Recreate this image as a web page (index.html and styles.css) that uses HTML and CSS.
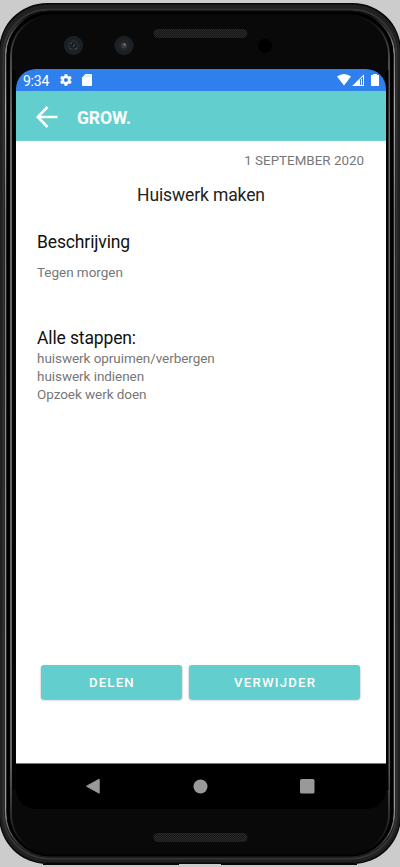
FILE: index.html
```html
<!DOCTYPE html>
<html lang="nl">
<head>
<meta charset="utf-8">
<title>GROW.</title>
<link rel="stylesheet" href="styles.css">
</head>
<body>
<div class="phone">
  <svg class="bezel" width="400" height="867" viewBox="0 0 400 867" fill="none" aria-hidden="true">
    <defs>
      <linearGradient id="silver" x1="0" y1="0" x2="0" y2="867" gradientUnits="userSpaceOnUse">
        <stop offset=".015" stop-color="#111"/><stop offset=".05" stop-color="#777"/><stop offset=".12" stop-color="#aaa"/><stop offset=".25" stop-color="#777"/><stop offset=".75" stop-color="#999"/><stop offset=".93" stop-color="#999"/><stop offset=".985" stop-color="#222"/>
      </linearGradient>
      <linearGradient id="inner" x1="0" y1="0" x2="0" y2="867" gradientUnits="userSpaceOnUse">
        <stop offset=".018" stop-color="#08080a"/><stop offset=".07" stop-color="#55555c"/><stop offset=".15" stop-color="#77777e"/><stop offset=".88" stop-color="#707078"/><stop offset=".98" stop-color="#08080a"/>
      </linearGradient>
      <pattern id="mesh" width="2" height="2" patternUnits="userSpaceOnUse"><path d="M0 0h2v2H0z" fill="#151515"/><path d="M0 0h1v1H0zM1 1h1v1H1z" fill="#2b2b2b"/></pattern>
    </defs>
    <rect x="-1" y="3" width="402" height="861" rx="48" fill="#090909"/>
    <path d="M43 863.500h136v1.500H43zM221 863.500h136v1.500H221z" fill="#050505"/>
    <rect x="2" y="6.500" width="396" height="854" rx="46" stroke="#202020" stroke-width="4"/>
    <rect x="3.500" y="9.500" width="393" height="849" rx="45" stroke="#333" stroke-width="2"/>
    <rect x="5.700" y="11.500" width="388.600" height="845" rx="44" stroke="url(#silver)" stroke-width="1.600"/>
    <rect x="8" y="13" width="384" height="842" rx="42" stroke="#000" stroke-width="3"/>
    <rect x="11" y="15.500" width="378" height="838.500" rx="40" stroke="url(#inner)" stroke-width="1.700"/>
    <path d="M14 70v720M387 70v720" stroke="#020203" stroke-width="3"/>
    <rect x="153.500" y="29" width="94" height="9" rx="4.500" fill="url(#mesh)"/>
    <rect x="153.500" y="833" width="94" height="9" rx="4.500" fill="url(#mesh)"/>
    <circle cx="73.500" cy="45.500" r="9.700" fill="#192026"/><circle cx="73.500" cy="45.500" r="6" fill="#262729"/><circle cx="73.500" cy="45.500" r="3" fill="#161c26"/><path d="M71 43l1 1M73 47l2-3M75 49l2-1M70 48l1 1" stroke="#555b66"/>
    <circle cx="124" cy="45.500" r="9.700" fill="#192026"/><circle cx="124" cy="45.500" r="6" fill="#222427"/><circle cx="124" cy="45.500" r="3" fill="#3b3c3e"/><circle cx="124.500" cy="44.500" r="1" fill="#8a8a8a"/>
    <circle cx="265" cy="45.700" r="7" fill="#000"/>
  </svg>
  <div class="screen">
    <div class="status">
      <span class="time">9:34</span>
      <svg class="gear" width="14" height="14" viewBox="0 0 24 24"><path fill="#fff" fill-rule="evenodd" d="M19.400 13a7.500 7.500 0 0 0 0-2l2.100-1.600a.5.5 0 0 0 .1-.7l-2-3.400a.5.5 0 0 0-.6-.2l-2.500 1a7.300 7.300 0 0 0-1.700-1l-.4-2.600a.5.5 0 0 0-.5-.5h-4a.5.5 0 0 0-.5.5L9 5.100a7.700 7.700 0 0 0-1.700 1l-2.500-1a.5.5 0 0 0-.6.2l-2 3.400a.5.500 0 0 0 .1.700L4.500 11a7.900 7.900 0 0 0 0 2l-2.200 1.600a.5.500 0 0 0-.1.700l2 3.400c.1.200.4.300.6.200l2.500-1a7.300 7.300 0 0 0 1.700 1l.4 2.600c0 .3.200.5.500.5h4c.3 0 .5-.2.500-.5l.4-2.600a7.700 7.700 0 0 0 1.700-1l2.500 1c.2.100.5 0 .6-.2l2-3.400a.5.500 0 0 0-.1-.7zM12 15.500a3.500 3.500 0 1 1 0-7 3.500 3.500 0 0 1 0 7z"/></svg>
      <svg class="sd" width="10" height="12" viewBox="0 0 10 12"><path fill="#fff" d="M3.500 0H9a1 1 0 0 1 1 1v10a1 1 0 0 1-1 1H1a1 1 0 0 1-1-1V3.500z"/><path d="M4 1.200v2M6 1.200v2M8 1.200v2" stroke="#2f80ed" stroke-opacity=".35"/></svg>
      <svg class="signals" width="42" height="12" viewBox="0 0 42 12"><path fill="#fff" d="M0 2.500Q7-2.500 14 2.500L7 11.500zM15.200 12L27 .2V12z"/><path fill="#2f80ed" d="M23 5.500l3-3V11h-3z"/><path fill="#fff" d="M24 5h1v6h-1zM34 1h2V0h4v1h2v11h-8z"/></svg>
    </div>
    <header class="bar">
      <svg width="22" height="22" viewBox="0 0 22 22" fill="none" stroke="#fff" stroke-width="2.600"><path d="M21.500 11H2M11.500 1L1.700 11l9.800 10"/></svg>
      <h1>GROW.</h1>
    </header>
    <main class="content">
      <p class="date">1 SEPTEMBER 2020</p>
      <h2 class="task">Huiswerk maken</h2>
      <h3 class="label">Beschrijving</h3>
      <p class="description">Tegen morgen</p>
      <h3 class="label">Alle stappen:</h3>
      <ul class="steps">
        <li>huiswerk opruimen/verbergen</li>
        <li>huiswerk indienen</li>
        <li>Opzoek werk doen</li>
      </ul>
      <div class="actions">
        <button class="share">DELEN</button>
        <button class="remove">VERWIJDER</button>
      </div>
    </main>
    <nav class="nav">
      <svg width="15" height="17" viewBox="0 0 15 17"><path d="M13.200 1.200v14L.5 8.200z" fill="#999" stroke="#999" stroke-width="1" stroke-linejoin="round"/></svg>
      <svg width="15" height="15" viewBox="0 0 15 15"><circle cx="7.500" cy="7.500" r="7" fill="#999"/></svg>
      <svg width="15" height="15" viewBox="0 0 15 15"><rect width="14.500" height="14.500" rx="1.500" fill="#999"/></svg>
    </nav>
  </div>
</div>
</body>
</html>
```
FILE: styles.css
```css
* { box-sizing: border-box; }
body { margin: 0; background: #ccc; font-family: Roboto, sans-serif; overflow: hidden; }
h1, h2, h3, p, ul { margin: 0; padding: 0; font-weight: 400; }
.phone { position: relative; width: 400px; height: 867px; padding: 69px 14px 58px 16px; }
.bezel { position: absolute; inset: 0; }
.screen { position: relative; width: 370px; height: 740px; border-radius: 20px; overflow: hidden; display: flex; flex-direction: column; }
.status { height: 22px; background: #2f80ed; display: flex; align-items: center; padding: 0 7px; color: #fff; }
.time { font-size: 14px; line-height: 22px; padding-top: 1px; width: 36px; letter-spacing: -.25px; }
.sd { margin-left: 9px; }
.signals { margin-left: auto; }
.bar { height: 50px; background: #62cfce; border-bottom: 1px solid #70d3d2; display: flex; align-items: center; padding: 3px 20px; gap: 19px; color: #fff; }
.bar { padding-bottom: 0; }
.bar h1 { font-size: 17.5px; font-weight: 700; line-height: 22px; padding-top: 2px; letter-spacing: -.1px; }
.content { flex: 1; display: flex; flex-direction: column; padding: 11px 22px 0 21px; color: #777; background: #fff; }
.date { font-size: 13.4px; line-height: 18px; text-align: right; }
.task { font-size: 17.5px; line-height: 22px; text-align: center; margin: 14px 0 0 1px; color: #222; letter-spacing: -.12px; }
.label { font-size: 17.5px; line-height: 22px; color: #111; letter-spacing: -.13px; }
.task + .label { margin-top: 25px; }
.description { font-size: 13.5px; line-height: 18px; margin: 10px 0 46px; letter-spacing: -.04px; }
.steps { list-style: none; font-size: 13.5px; line-height: 18px; letter-spacing: -.06px; }
.actions { display: flex; gap: 7.500px; margin: auto 4px 64px 4px; }
.actions button { height: 34px; padding: 1px 0 0 1px; border: 0; border-radius: 3px; background: #62cfce; color: #fff; font: 500 13.2px Roboto, sans-serif; letter-spacing: 1.2px; box-shadow: 0 1px 2px #0006; }
.share { width: 141px; }
.remove { width: 171px; }
.nav { height: 46px; background: #000; border-top: 1px solid #777; display: grid; grid-template-columns: repeat(3, 107px); justify-content: center; align-items: center; justify-items: center; padding: 0 2px 1px 0; }
```
